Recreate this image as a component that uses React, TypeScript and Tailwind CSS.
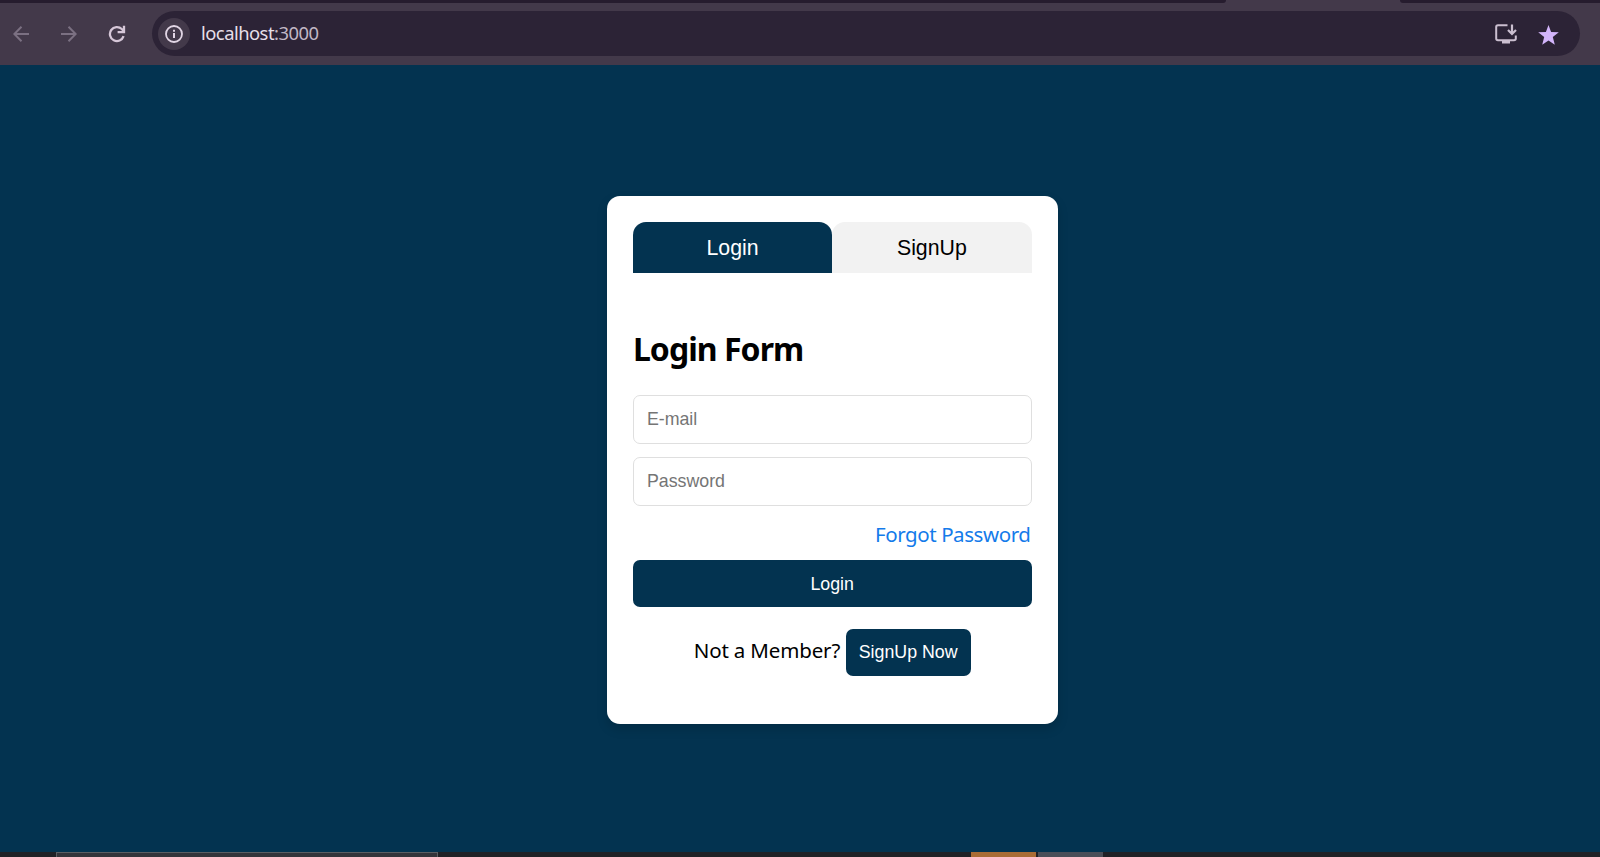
import { useState } from "react";

function BrowserBar() {
  return (
    <header className="flex h-[65px] w-full shrink-0 flex-col bg-[#43394a]">
      <div className="flex h-[3px] w-full shrink-0 justify-between">
        <div className="w-[1226px] rounded-br-[4px] bg-[#261c2e]" />
        <div className="w-[200px] rounded-bl-[4px] bg-[#261c2e]" />
      </div>
      <div className="flex flex-1 items-center pb-[1px] pl-[13px]">
        <svg className="h-4 w-4 shrink-0" viewBox="0 0 16 16" fill="none" stroke="#7b7082" strokeWidth="2">
          <path d="M16 8H2M8.5 .8 1.3 8l7.2 7.2" />
        </svg>
        <svg className="ml-[32px] h-4 w-4 shrink-0" viewBox="0 0 16 16" fill="none" stroke="#7b7082" strokeWidth="2">
          <path d="M0 8h14M7.5 .8 14.7 8l-7.2 7.2" />
        </svg>
        <svg className="ml-[31px] h-[18px] w-[18px] shrink-0" viewBox="0 0 18 18" fill="none" stroke="#d6c7d8" strokeWidth="2.3">
          <path d="M15.6 11.2A7 7 0 1 1 13.8 4L15.6 6" />
          <path d="M16 .8v6.400h-6.400" />
        </svg>
        <div className="ml-[26px] flex h-[45px] w-[1428px] shrink-0 items-center rounded-full bg-[#2c2336] pr-[21px] pl-[6px]">
          <div className="flex h-8 w-8 items-center justify-center rounded-full bg-[#43394a]">
            <svg className="h-[18px] w-[18px]" viewBox="0 0 18 18" fill="none" stroke="#e2d6e5">
              <circle cx="9" cy="9" r="8" strokeWidth="1.8" />
              <path d="M9 8v5M9 4.8v2" strokeWidth="2" />
            </svg>
          </div>
          <div className="ml-[11px] flex-1 font-['Noto_Sans','Open_Sans',sans-serif] text-[18.4px] leading-none tracking-[-0.52px] text-[#e6dfe9]">
            localhost<span className="text-[#c1b8c6]">:3000</span>
          </div>
          <svg className="mr-[21px] h-[20px] w-[22px]" viewBox="0 0 22 20" fill="none" stroke="#cbbfd0" strokeWidth="2">
            <path d="M12.5 1.2H3A1.8 1.8 0 0 0 1.2 3v11.500A1.8 1.8 0 0 0 3 16.300h16a1.8 1.8 0 0 0 1.8-1.8V11.500" />
            <path d="M17 .5v9M13 6l4 4 4-4" strokeWidth="2.200" />
            <path d="M7 16h8v3.500h-8z" fill="#cbbfd0" stroke="none" />
          </svg>
          <svg className="mt-[2px] h-[20px] w-[21px]" viewBox="0 0 21 20" fill="#d3b5fb">
            <path d="m10.5 0 2.6 6.900 7.700.4-6 4.800 2 7.600-6.300-4.300-6.300 4.300 2-7.600-6-4.800 7.700-.4z" />
          </svg>
        </div>
      </div>
    </header>
  );
}

function Field({ type, label }: { type: string; label: string }) {
  return (
    <input
      type={type}
      placeholder={label}
      className="h-[49px] w-full rounded-[7px] border border-[#dfdfdf] px-[13px] font-['Liberation_Sans',sans-serif] text-[17.8px] outline-none placeholder:text-[#757575]"
    />
  );
}

function AuthCard() {
  const [mode, setMode] = useState<"Login" | "SignUp">("Login");
  return (
    <main className="flex h-[528px] w-[451.4px] flex-col rounded-[13px] bg-white px-[26.4px] pt-[26.5px] font-['Noto_Sans','Open_Sans',sans-serif] text-black shadow-[0_5px_11px_rgba(0,0,0,0.15)]">
      <div className="flex h-[51.3px] w-full shrink-0">
        {(["Login", "SignUp"] as const).map((name) => (
          <button
            key={name}
            onClick={() => setMode(name)}
            className={
              mode === name
                ? "flex-1 rounded-t-[13px] bg-[#033350] pt-[2px] font-['Liberation_Sans',sans-serif] text-[21.3px] text-white"
                : "flex-1 rounded-t-[13px] bg-[#f2f2f2] pt-[2px] font-['Liberation_Sans',sans-serif] text-[21.3px] text-black"
            }
          >
            {name}
          </button>
        ))}
      </div>
      <h2 className="mt-[52px] h-[48px] text-[32px] leading-[48px] font-bold tracking-[-0.95px]">{mode} Form</h2>
      <form className="mt-[22px] flex flex-col" onSubmit={(e) => e.preventDefault()}>
        <div className="flex flex-col gap-[13px]">
          <Field type="text" label="E-mail" />
          <Field type="password" label="Password" />
        </div>
        <a href="#" className="mt-[13px] mr-[1px] h-[30px] self-end text-[20.5px] leading-[30px] tracking-[-0.42px] text-[#147bea]">
          Forgot Password
        </a>
        <button className="mt-[11px] h-[47px] w-full rounded-[7px] bg-[#033350] pt-[1px] font-['Liberation_Sans',sans-serif] text-[17.8px] text-white">
          Login
        </button>
        <div className="mt-[21.5px] flex h-[47px] items-center justify-center gap-[5.5px]">
          <span className="pb-[4px] text-[20.5px] leading-[30px] tracking-[-0.15px]">Not a Member?</span>
          <button className="h-[47px] w-[125px] rounded-[7px] bg-[#033350] pt-[1px] font-['Liberation_Sans',sans-serif] text-[17.8px] whitespace-nowrap text-white">
            SignUp Now
          </button>
        </div>
      </form>
    </main>
  );
}

function Taskbar() {
  return (
    <footer className="flex h-[5px] w-full shrink-0 bg-[#202126]">
      <div className="ml-[56px] h-full w-[382px] border-x border-t border-[#5b5e62] bg-[#34343a]" />
      <div className="ml-[533px] h-full w-[65px] bg-[#a96c35]" />
      <div className="ml-[2px] h-full w-[65px] bg-[#4a4e58]" />
    </footer>
  );
}

export default function App() {
  return (
    <div className="flex h-[857px] w-[1600px] flex-col overflow-hidden bg-[#033350]">
      <BrowserBar />
      <div className="flex flex-1 items-start pt-[130.5px] pl-[606.5px]">
        <AuthCard />
      </div>
      <Taskbar />
    </div>
  );
}
